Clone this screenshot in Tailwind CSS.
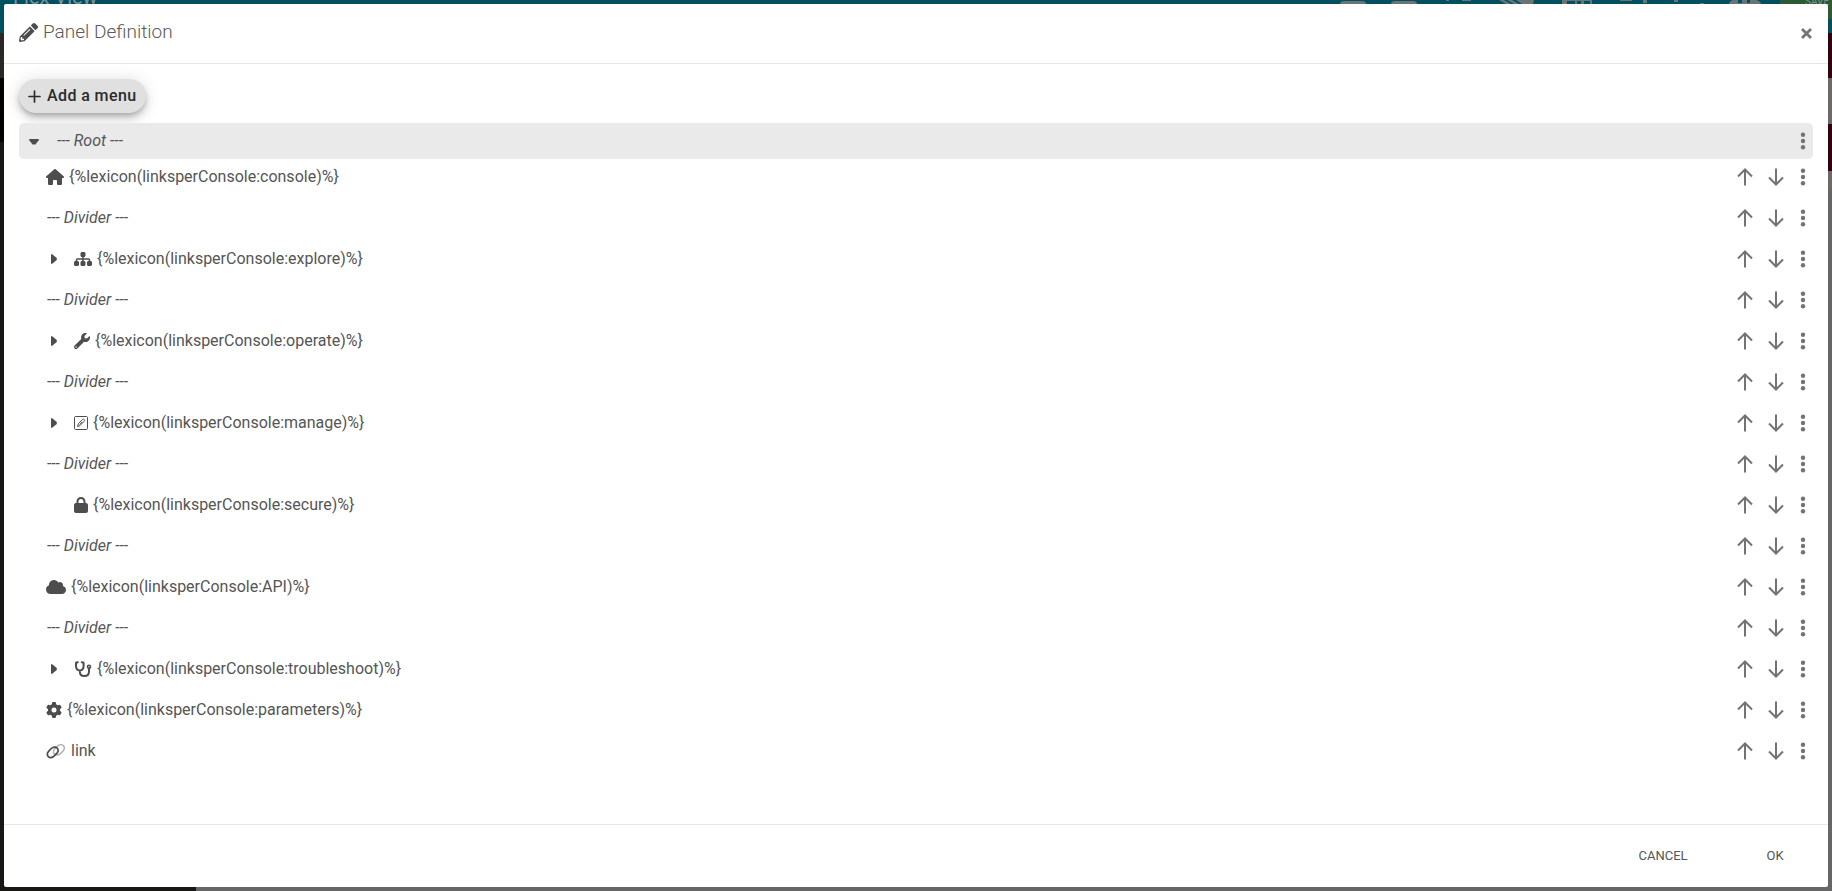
<!DOCTYPE html>
<html lang="en">
<head>
<meta charset="utf-8">
<title>Panel Definition</title>
<script src="https://cdn.jsdelivr.net/npm/@tailwindcss/browser@4"></script>
</head>
<body class="font-['Roboto','Liberation_Sans',sans-serif] text-[#4d4d4d] antialiased">

<svg class="hidden" aria-hidden="true">
  <symbol id="pencil" viewBox="0 0 512 512"><path d="M497.9 142.1l-46.1 46.1c-4.7 4.7-12.3 4.7-17 0l-111-111c-4.7-4.7-4.7-12.3 0-17l46.1-46.1c18.7-18.7 49.1-18.7 67.9 0l60.1 60.1c18.8 18.7 18.8 49.1 0 67.900zM284.2 99.8L21.6 362.400.4 483.900c-2.900 16.400 11.400 30.600 27.800 27.800l121.500-21.300 262.600-262.600c4.700-4.700 4.700-12.300 0-17l-111-111c-4.800-4.700-12.400-4.700-17.100 0zM124.100 339.900c-5.500-5.500-5.500-14.300 0-19.800l154-154c5.500-5.500 14.300-5.500 19.800 0s5.500 14.300 0 19.800l-154 154c-5.500 5.500-14.300 5.500-19.800 0zM88 424h48v36.300l-64.500 11.300-31.100-31.100L51.700 376H88v48z"/></symbol>
  <symbol id="home" viewBox="0 0 576 512"><path d="M575.8 255.5c0 18-15 32.1-32 32.1h-32l.7 160.2c0 2.7-.2 5.4-.5 8.1V472c0 22.100-17.900 40-40 40H392c-22.100 0-40-17.900-40-40V384c0-17.700-14.300-32-32-32h-64c-17.700 0-32 14.300-32 32v88c0 22.100-17.900 40-40 40h-80c-22.100 0-40-17.900-40-40V287.600H32c-18 0-32-14-32-32.100 0-9 3-17 10-24L266.400 8c7-7 15-8 22-8s15 2 21 7l255.400 224.500c8 7 12 15 11 24z"/></symbol>
  <symbol id="sitemap" viewBox="0 0 576 512"><path d="M208 80c0-26.500 21.500-48 48-48h64c26.500 0 48 21.500 48 48v64c0 26.500-21.500 48-48 48h-8v40h152c30.900 0 56 25.100 56 56v32h8c26.500 0 48 21.500 48 48v64c0 26.500-21.500 48-48 48h-64c-26.500 0-48-21.500-48-48v-64c0-26.500 21.500-48 48-48h8v-32c0-4.400-3.600-8-8-8H312v40h8c26.500 0 48 21.500 48 48v64c0 26.500-21.500 48-48 48h-64c-26.500 0-48-21.500-48-48v-64c0-26.500 21.500-48 48-48h8v-40H112c-4.400 0-8 3.600-8 8v32h8c26.500 0 48 21.500 48 48v64c0 26.500-21.500 48-48 48H48c-26.500 0-48-21.500-48-48v-64c0-26.500 21.500-48 48-48h8v-32c0-30.900 25.100-56 56-56h152v-40h-8c-26.500 0-48-21.500-48-48V80z"/></symbol>
  <symbol id="wrench" viewBox="0 0 512 512"><path d="M507.73 109.100c-2.240-9.030-13.540-12.090-20.120-5.510l-74.360 74.360-67.880-11.310-11.310-67.880 74.360-74.360c6.620-6.620 3.430-17.900-5.660-20.160-47.380-11.740-99.550.91-136.580 37.930-39.640 39.640-50.550 97.100-34.050 147.200L18.740 402.760c-24.990 24.990-24.990 65.510 0 90.500s65.510 24.990 90.500 0l213.210-213.210c50.120 16.710 107.470 5.680 147.370-34.220 37.070-37.070 49.700-89.320 37.910-136.730zM64 472c-13.250 0-24-10.750-24-24s10.750-24 24-24 24 10.740 24 24-10.750 24-24 24z"/></symbol>
  <symbol id="edit" viewBox="0 0 14 16"><path fill="none" stroke="currentColor" d="M1.500 1.500h11c.6 0 1 .4 1 1v11c0 .6-.4 1-1 1h-11c-.6 0-1-.4-1-1v-11c0-.6.400-1 1-1zM3.600 11.600l.6-2.700 4.300-4.400c.5-.5 1.200-.5 1.700 0s.5 1.200 0 1.700l-4.300 4.500zM5.700 9.500l2.500-2.600"/></symbol>
  <symbol id="lock" viewBox="0 0 448 512"><path d="M144 144v48h160v-48c0-44.200-35.800-80-80-80s-80 35.800-80 80zM80 192v-48C80 64.500 144.500 0 224 0s144 64.500 144 144v48h16c35.300 0 64 28.700 64 64v192c0 35.300-28.700 64-64 64H64c-35.300 0-64-28.700-64-64V256c0-35.300 28.700-64 64-64h16z"/></symbol>
  <symbol id="cloud" viewBox="0 0 640 512"><path d="M0 336c0 79.500 64.500 144 144 144h368c70.700 0 128-57.300 128-128 0-61.900-44-113.600-102.400-125.400 4.100-10.700 6.400-22.400 6.400-34.600 0-53-43-96-96-96-19.700 0-38.100 6-53.300 16.200C367 64.200 315.300 32 256 32 167.600 32 96 103.600 96 192c0 2.700.1 5.400.2 8.100C40.200 219.800 0 273.200 0 336z"/></symbol>
  <symbol id="stethoscope" viewBox="0 0 18 16"><path fill="none" stroke="currentColor" stroke-width="2" stroke-linecap="round" stroke-linejoin="round" d="M3.800 1.200 2 1.700v3.100c0 2.700 1.400 4.700 3.800 4.700s3.800-2 3.800-4.700V1.700l-1.800-.5M5.800 9.700v.8c0 2.700 1.700 4.500 4.500 4.500s4.700-1.800 4.700-4.500V7.500"/><circle cx="15" cy="5.800" r="1.500" fill="none" stroke="currentColor" stroke-width="1.600"/></symbol>
  <symbol id="gear" viewBox="0 0 512 512"><path d="M495.9 166.600c3.200 8.700.5 18.400-6.400 24.600l-43.300 39.400c1.100 8.300 1.700 16.800 1.700 25.400s-.6 17.100-1.700 25.400l43.300 39.400c6.900 6.200 9.600 15.900 6.400 24.600-4.400 11.900-9.700 23.300-15.800 34.300l-4.700 8.100c-6.600 11-14 21.400-22.100 31.200-5.900 7.200-15.700 9.600-24.500 6.800l-55.700-17.700c-13.400 10.300-28.200 18.900-44 25.400l-12.500 57.100c-2 9.100-9 16.300-18.200 17.800-13.800 2.300-28 3.500-42.500 3.500s-28.700-1.200-42.500-3.500c-9.200-1.500-16.200-8.700-18.200-17.800l-12.500-57.100c-15.800-6.500-30.600-15.100-44-25.400L83.100 425.900c-8.800 2.800-18.600.3-24.500-6.800-8.100-9.800-15.500-20.200-22.100-31.200l-4.700-8.100c-6.100-11-11.400-22.400-15.800-34.300-3.200-8.700-.5-18.400 6.400-24.600l43.300-39.400C64.600 273.100 64 264.600 64 256s.6-17.100 1.700-25.400l-43.300-39.400c-6.900-6.200-9.600-15.900-6.400-24.600 4.400-11.900 9.700-23.300 15.800-34.300l4.700-8.100c6.600-11 14-21.400 22.100-31.200 5.900-7.200 15.700-9.600 24.500-6.800l55.700 17.700c13.400-10.300 28.200-18.900 44-25.400l12.500-57.100c2-9.100 9-16.300 18.200-17.800C227.300 1.200 241.500 0 256 0s28.700 1.200 42.500 3.500c9.200 1.500 16.200 8.700 18.200 17.800l12.500 57.100c15.800 6.500 30.600 15.100 44 25.400l55.700-17.700c8.800-2.800 18.600-.3 24.500 6.800 8.100 9.800 15.500 20.200 22.100 31.200l4.700 8.100c6.100 11 11.400 22.400 15.800 34.300zM256 336a80 80 0 1 0 0-160 80 80 0 1 0 0 160z"/></symbol>
  <symbol id="link" viewBox="0 0 20 16"><g fill="none" stroke="currentColor" stroke-linecap="round"><path stroke-width="1.500" opacity=".45" d="M9.600 11.500c-2.300-.6-2.900-3.400-1.200-5.200l2.700-2.900c1.700-1.800 4.500-2.400 6.200-.9 1.600 1.500 1.300 3.900-.2 5.500l-2.500 2.600c-1.300 1.300-2.700 1.500-4.200 1.200"/><path stroke-width="1.700" d="M9.500 4.200C8 4 6.500 4.300 5.300 5.500L2.600 8.300C1.100 9.900.8 12.200 2.300 13.600c1.500 1.500 4.100 1.200 5.700-.5l3-3c1.700-1.800 1.600-4.600-.7-5.600"/></g></symbol>
  <symbol id="up" viewBox="0 0 18 18"><path fill="none" stroke="currentColor" stroke-width="2" d="M9 17.500V2M2 8.500l7-7 7 7"/></symbol>
  <symbol id="down" viewBox="0 0 18 18"><path fill="none" stroke="currentColor" stroke-width="2" d="M9 .5V16M2 9.500l7 7 7-7"/></symbol>
  <symbol id="dots" viewBox="0 0 6 18"><circle cx="3" cy="2.700" r="2.200"/><circle cx="3" cy="9" r="2.200"/><circle cx="3" cy="15.300" r="2.200"/></symbol>
</svg>

<!-- Dimmed application behind the dialog -->
<div class="fixed inset-0 flex flex-col overflow-hidden bg-[#666]" aria-hidden="true">
  <div class="flex h-[33px] items-start justify-between bg-[#005060] text-[#7b9296]">
    <span class="-mt-3.5 pl-[13px] text-xl leading-[22px]">Flex View</span>
    <div class="flex h-full">
      <svg class="h-1 w-[440px]" viewBox="0 0 440 4" fill="#6a7475"><path d="M0 4q0-3 4-3h18q4 0 4 3zM51 4q0-3 4-3h18q4 0 4 3zM106 0h3v1h-3zM122 0h9v1h-9zM159 0h5l7 4h-5zM167 0h5l7 4h-5zM176 0h18l-1 4h-11zM222 0h30v4h-2V1h-6v3h-3V1h-4v3h-2V1h-8v3h-5zM280 0h12v1h-12zM303 0h4v3h-4zM334 0h4v2h-4zM360 3h4v1h-4zM389 4q1-4 5-4h4v3h4V0h5v3h3V0h5q5 0 6 4z"/></svg>
      <div class="h-[19px] w-[52px] bg-[#2b5a33] pl-[25px]"><div class="-mt-1 text-[10px] leading-3">SAVE</div></div>
    </div>
  </div>
  <div class="flex flex-1 justify-between">
    <div class="flex w-[196px] flex-col bg-[#191714]">
      <div class="h-[45px] bg-[#2a2725]"></div>
      <div class="h-16 bg-[#040100]"></div>
    </div>
    <div class="flex w-8 flex-col">
      <div class="h-[45px] bg-[#33000f]"></div>
      <div class="h-[46px] bg-[#6c6966]"></div>
      <div class="h-[47px] bg-[#33000f]"></div>
      <div class="h-5 bg-[#6c6966]"></div>
    </div>
  </div>
</div>

<div role="dialog" aria-labelledby="dialog-title" class="fixed inset-1 flex flex-col rounded-[2px] bg-white">
  <header class="flex h-15 shrink-0 items-center justify-between border-b border-[#e5e5e5] pr-4 pl-[15px]">
    <h1 id="dialog-title" class="flex items-center gap-[5px] pb-0.5 text-[19px] font-light">
      <svg class="size-[19px] fill-current"><use href="#pencil"/></svg><span class="text-[#5a5a5a]">Panel Definition</span>
    </h1>
    <button type="button" aria-label="Close" class="text-[#757575]">
      <svg class="size-[11px]" viewBox="0 0 11 11"><path stroke="currentColor" stroke-width="2.800" d="M1 1l9 9M10 1l-9 9"/></svg>
    </button>
  </header>

  <main class="min-h-0 flex-1 px-[15px] pt-[15px]">
    <button type="button" class="flex h-[34px] items-center gap-1.5 rounded-full bg-[#e0e0e0] px-[9px] text-base font-medium tracking-wide text-[#2b2b2b] shadow-[0_3px_5px_-1px_rgba(0,0,0,.2),0_6px_10px_0_rgba(0,0,0,.14),0_1px_18px_0_rgba(0,0,0,.12)]">
      <svg class="size-[13px]" viewBox="0 0 13 13"><path stroke="currentColor" stroke-width="1.700" stroke-linecap="round" d="M6.500 1v11M1 6.500h11"/></svg>Add a menu
    </button>

    <div class="mt-2.5 flex h-9 items-center justify-between rounded-[5px] bg-[#eaeaea] pr-[7px] pl-2.5">
      <div class="flex items-center">
        <button type="button" aria-label="Collapse Root" class="w-[27px]">
          <svg class="h-2 w-2.5 translate-y-px fill-current" viewBox="0 0 10 8"><path d="M.3 1h9.400v1.200L6.500 6.600H3.500L.3 2.200z"/></svg>
        </button>
        <span class="px-px text-[#555] italic">--- Root ---</span>
      </div>
      <button type="button" aria-label="Root menu" class="text-[#737373]"><svg class="h-[18px] w-1.5 fill-current"><use href="#dots"/></svg></button>
    </div>
    <ul id="tree" class="flex flex-col gap-[5px] pr-[7px] pl-[27px]"></ul>
  </main>

  <footer class="flex h-[63px] shrink-0 items-center justify-end gap-9 border-t border-[#e5e5e5] px-[15px] text-[13px] text-[#555]">
    <button type="button" class="h-9 w-19">CANCEL</button>
    <button type="button" class="h-9 w-19">OK</button>
  </footer>
</div>

<script>
  // kind: "divider", "leaf" (no submenu), "closed" (collapsed submenu), "empty" (submenu without entries)
  const label = name => `{%lexicon(linksperConsole:${name})%}`;
  const divider = { kind: 'divider' };
  const items = [
    { kind: 'leaf', icon: 'home', size: 'h-4 w-[18px]', text: label('console') }, divider,
    { kind: 'closed', icon: 'sitemap', size: 'h-4 w-[18px]', text: label('explore') }, divider,
    { kind: 'closed', icon: 'wrench', size: 'h-4 w-4', text: label('operate') }, divider,
    { kind: 'closed', icon: 'edit', size: 'h-4 w-3.5', text: label('manage') }, divider,
    { kind: 'empty', icon: 'lock', size: 'h-4 w-3.5', text: label('secure') }, divider,
    { kind: 'leaf', icon: 'cloud', size: 'h-4 w-5', text: label('API') }, divider,
    { kind: 'closed', icon: 'stethoscope', size: 'h-4 w-[18px]', text: label('troubleshoot') },
    { kind: 'leaf', icon: 'gear', size: 'h-4 w-4', text: label('parameters') },
    { kind: 'leaf', icon: 'link', size: 'h-4 w-5', text: 'link' },
  ];
  const caret = `<button type="button" aria-label="Expand" class="w-7 pl-1"><svg class="h-2.5 w-2 fill-current" viewBox="0 0 8 10"><path d="M1 .3h1.200L6.800 4v2L2.200 9.700H1z"/></svg></button>`;
  const content = item => item.kind === 'divider'
    ? '<span class="px-px text-[#555] italic">--- Divider ---</span>'
    : `${item.kind === 'closed' ? caret : item.kind === 'empty' ? '<span class="w-7"></span>' : ''}
       <svg class="${item.size} mr-[5px] fill-current"><use href="#${item.icon}"/></svg><span class="text-[#555]">${item.text}</span>`;
  document.getElementById('tree').innerHTML = items.map(item => `
    <li class="flex h-9 items-center justify-between">
      <div class="flex items-center">${content(item)}</div>
      <div class="flex items-center text-[#737373]">
        <button type="button" aria-label="Move up" class="mr-[13px]"><svg class="size-[18px]"><use href="#up"/></svg></button>
        <button type="button" aria-label="Move down" class="mr-[15px]"><svg class="size-[18px]"><use href="#down"/></svg></button>
        <button type="button" aria-label="Item menu"><svg class="h-[18px] w-1.5 fill-current"><use href="#dots"/></svg></button>
      </div>
    </li>`).join('');
</script>
</body>
</html>
